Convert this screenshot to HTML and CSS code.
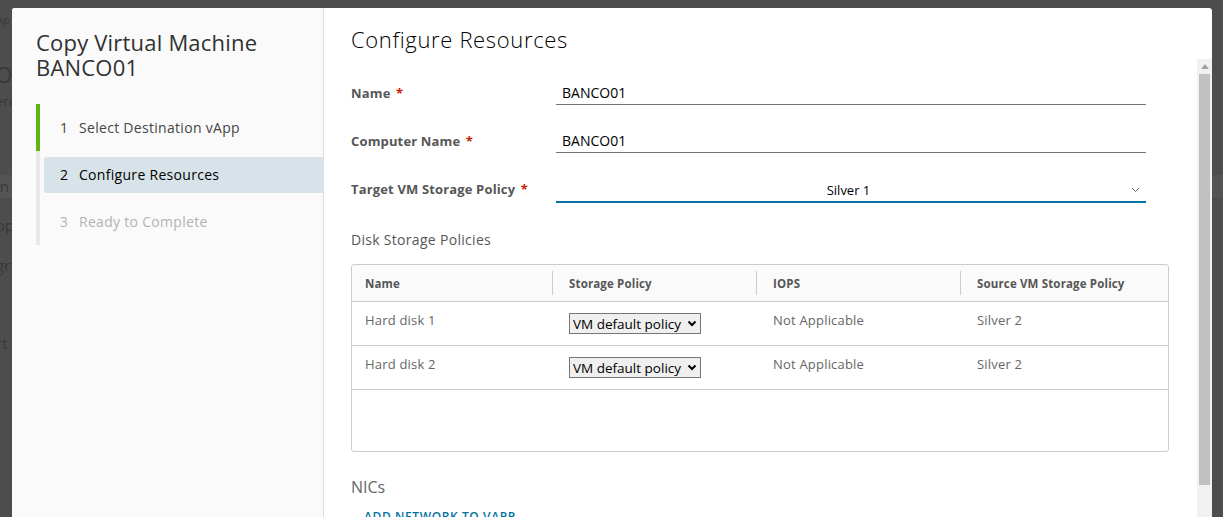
FILE: index.html
```html
<!DOCTYPE html>
<html lang="en">
<head>
<meta charset="utf-8">
<title>Copy Virtual Machine</title>
<link rel="stylesheet" href="styles.css">
</head>
<body>
<div class="backdrop">
  <div class="bg-line bg-ap">Ap</div>
  <div class="bg-line bg-op">Op</div>
  <div class="bg-line bg-ere">ere</div>
  <div class="bg-line bg-row">in</div>
  <div class="bg-line bg-op2">op</div>
  <div class="bg-line bg-gr">gr</div>
  <div class="bg-line bg-rt">rt</div>
</div>

<div class="modal">
  <aside class="wizard-nav">
    <h2 class="wizard-title"><span class="title-line">Copy Virtual Machine</span><span class="title-line">BANCO01</span></h2>
    <ol class="steps">
      <li class="step done"><div class="step-inner"><span class="num">1</span>Select Destination vApp</div></li>
      <li class="step current"><div class="step-inner"><span class="num">2</span>Configure Resources</div></li>
      <li class="step disabled"><div class="step-inner"><span class="num">3</span>Ready to Complete</div></li>
    </ol>
  </aside>

  <section class="wizard-main">
    <header class="main-header"><h3 class="main-title">Configure Resources</h3></header>
    <div class="scroll">
      <div class="scroll-content">
        <div class="form">
          <div class="form-row">
            <div class="label">Name <span class="req">*</span></div>
            <div class="input">BANCO01</div>
          </div>
          <div class="form-row">
            <div class="label">Computer Name <span class="req">*</span></div>
            <div class="input">BANCO01</div>
          </div>
          <div class="form-row">
            <div class="label">Target VM Storage Policy <span class="req">*</span></div>
            <div class="select">
              <span class="select-value">Silver 1</span>
              <svg class="select-caret" width="9" height="6" viewBox="0 0 9 6"><polyline points="1,1 4.5,4.5 8,1" fill="none" stroke="#666" stroke-width="1"/></svg>
            </div>
          </div>
        </div>

        <div class="section-title">Disk Storage Policies</div>

        <div class="grid">
          <div class="grid-head">
            <div class="hcell">Name</div>
            <div class="hcell sep">Storage Policy</div>
            <div class="hcell sep">IOPS</div>
            <div class="hcell sep">Source VM Storage Policy</div>
          </div>
          <div class="grid-row">
            <div class="cell">Hard disk 1</div>
            <div class="cell"><div class="native-select"><span>VM default policy</span><svg width="10" height="7" viewBox="0 0 10 7"><polyline points="1.5,1.5 5,5 8.5,1.5" fill="none" stroke="#000" stroke-width="2"/></svg></div></div>
            <div class="cell">Not Applicable</div>
            <div class="cell">Silver 2</div>
          </div>
          <div class="grid-row">
            <div class="cell">Hard disk 2</div>
            <div class="cell"><div class="native-select"><span>VM default policy</span><svg width="10" height="7" viewBox="0 0 10 7"><polyline points="1.5,1.5 5,5 8.5,1.5" fill="none" stroke="#000" stroke-width="2"/></svg></div></div>
            <div class="cell">Not Applicable</div>
            <div class="cell">Silver 2</div>
          </div>
          <div class="grid-empty"></div>
        </div>

        <div class="nics-title">NICs</div>
        <button class="flat-btn" type="button">Add network to vApp</button>
      </div>
      <div class="scrollbar">
        <svg class="sb-arrow" width="8" height="5" viewBox="0 0 8 5"><polygon points="0,5 4,0 8,5" fill="#a3a3a3"/></svg>
        <div class="sb-thumb"></div>
      </div>
    </div>
  </section>
</div>
</body>
</html>
```

FILE: styles.css
```css
* { box-sizing: border-box; }
html, body { margin: 0; height: 100%; overflow: hidden; }
body {
  background: #4d4d4d;
  font-family: "Open Sans", "Noto Sans", sans-serif;
}

/* backdrop (page behind the modal) */
.backdrop { padding-top: 13px; color: #383838; margin-left: -4px; }
.bg-line { font-size: 14px; line-height: 14px; }
.bg-ap { font-size: 11px; }
.bg-op { margin-top: 36px; font-size: 21px; line-height: 24px; }
.bg-ere { margin-top: 7px; font-size: 13px; }
.bg-row { margin-top: 67px; height: 23px; line-height: 23px; background: #545454; font-size: 15px; }
.bg-op2 { margin-top: 17px; line-height: 20px; font-size: 15px; }
.bg-gr { margin-top: 20px; line-height: 20px; font-size: 15px; }
.bg-rt { margin-top: 58px; line-height: 20px; font-size: 15px; }

/* modal */
.modal {
  position: absolute;
  left: 12px;
  top: 8px;
  width: 1200px;
  height: 560px;
  display: flex;
  background: #fff;
  border-radius: 3px 3px 0 0;
  overflow: hidden;
}

.wizard-nav {
  width: 312px;
  flex: none;
  background: #fafafa;
  border-right: 1px solid #dddddd;
  padding: 22px 0 0 24px;
}
.wizard-title {
  margin: 0;
  display: flex;
  flex-direction: column;
  font-size: 22px;
  font-weight: 400;
  letter-spacing: 0.2px;
  color: #313131;
}
.title-line { display: block; height: 25px; line-height: 25px; }
.steps { list-style: none; margin: 24px 0 0; padding: 0; }
.step {
  height: 47px;
  border-left: 4px solid #e8e8e8;
  padding: 6px 0 5px 4px;
}
.step.done { border-left-color: #60b515; }
.step-inner {
  height: 36px;
  display: flex;
  align-items: center;
  padding: 0 0 1px 16px;
  font-size: 14px;
  letter-spacing: 0.3px;
  color: #454545;
  border-radius: 3px 0 0 3px;
}
.step.current .step-inner { background: #d8e3e9; color: #000; }
.step.disabled .step-inner { color: #b3b3b3; }
.num { width: 19px; flex: none; letter-spacing: 0; }

.wizard-main { flex: 1; min-width: 0; display: flex; flex-direction: column; }
.main-header { height: 51px; flex: none; padding: 19px 0 0 27px; }
.main-title { margin: 0; font-size: 22px; line-height: 25px; font-weight: 300; letter-spacing: 0.65px; color: #000; }

.scroll { flex: 1; min-height: 0; display: flex; }
.scroll-content { flex: 1; min-width: 0; padding: 22px 28px 0 27px; overflow: hidden; }

.form { display: flex; flex-direction: column; gap: 24px; }
.form-row { display: flex; align-items: center; height: 24px; }
.label { width: 205px; flex: none; font-size: 13px; font-weight: 700; letter-spacing: 0.15px; color: #565656; }
.req { color: #c92100; margin-left: 2px; }
.input {
  width: 590px;
  height: 24px;
  border-bottom: 1px solid #747474;
  padding: 0 6px;
  font-size: 14px;
  line-height: 23px;
  color: #000;
}
.select {
  width: 590px;
  height: 26px;
  align-self: flex-start;
  border-bottom: 2px solid #0072a3;
  display: flex;
  align-items: center;
  padding: 1px 6px 0 10px;
  font-size: 13px;
  color: #000;
}
.select-value { flex: 1; text-align: center; }
.select-caret { flex: none; }

.section-title { margin-top: 29px; font-size: 14px; line-height: 20px; letter-spacing: 0.3px; color: #565656; }

.grid {
  margin-top: 14px;
  border: 1px solid #cccccc;
  border-radius: 3px;
  overflow: hidden;
}
.grid-head {
  display: grid;
  grid-template-columns: repeat(4, 1fr);
  height: 37px;
  background: #fafafa;
  border-bottom: 1px solid #cccccc;
}
.hcell {
  position: relative;
  display: flex;
  align-items: center;
  padding: 0 13px;
  font-size: 11.5px;
  font-weight: 700;
  letter-spacing: 0.15px;
  color: #565656;
}
.hcell.sep::before {
  content: "";
  position: absolute;
  left: -4px;
  top: 6px;
  bottom: 6px;
  width: 1px;
  background: #cccccc;
}
.grid-row {
  display: grid;
  grid-template-columns: repeat(4, 1fr);
  height: 44px;
  border-bottom: 1px solid #cccccc;
}
.cell {
  padding: 9px 13px 0;
  font-size: 13px;
  line-height: 18px;
  letter-spacing: 0.2px;
  color: #666;
}
.grid-empty { height: 61px; }

.native-select {
  margin-top: 2px;
  width: 132px;
  height: 21px;
  border: 1px solid #767676;
  background: #efefef;
  display: flex;
  align-items: center;
  justify-content: space-between;
  padding: 0 3px 0 3px;
  font-size: 13.5px;
  letter-spacing: 0;
  color: #000;
  white-space: nowrap;
}

.nics-title { margin-top: 25px; font-size: 16px; line-height: 20px; color: #666; }
.flat-btn {
  margin-top: 11px;
  border: 0;
  background: none;
  padding: 0 0 0 13px;
  font-family: inherit;
  font-size: 12px;
  line-height: 18px;
  font-weight: 600;
  letter-spacing: 0.6px;
  text-transform: uppercase;
  color: #0072a3;
}

.scrollbar {
  width: 15px;
  flex: none;
  background: #f1f1f1;
  display: flex;
  flex-direction: column;
  align-items: center;
  padding-top: 5px;
}
.sb-arrow { display: block; }
.sb-thumb { margin-top: 5px; width: 11px; height: 411px; background: #c1c1c1; }
```
